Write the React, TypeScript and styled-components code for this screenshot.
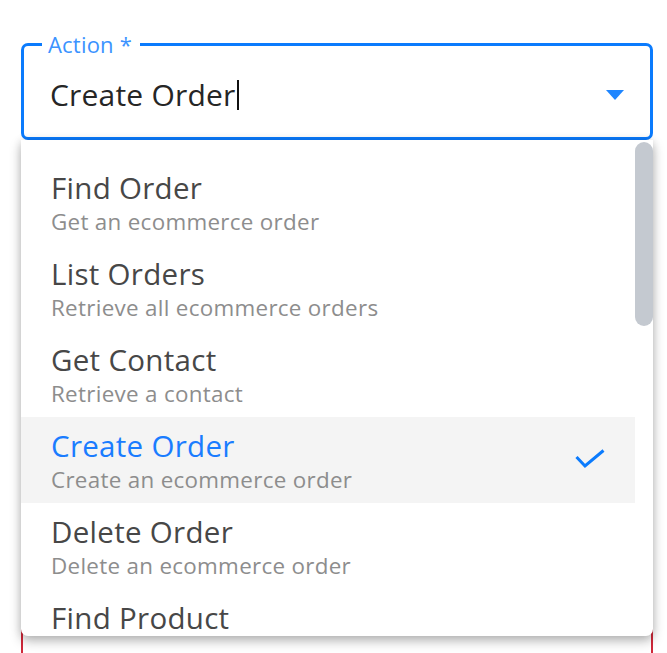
import React, { useState } from "react";
import styled, { createGlobalStyle } from "styled-components";

const GlobalStyle = createGlobalStyle`
  html, body {
    margin: 0;
    padding: 0;
    background: #ffffff;
    font-family: "Open Sans", "Liberation Sans", sans-serif;
  }
`;

const Page = styled.div`
  padding: 31px 14px 0 21px;
  height: 653px;
  box-sizing: border-box;
  overflow: hidden;
`;

const Field = styled.div`
  position: relative;
  z-index: 2;
`;

const Outline = styled.fieldset`
  margin: 0;
  padding: 0 26px 4px 26px;
  border: 3px solid #0b7bfd;
  border-radius: 7px;
  min-width: 0;
`;

const Label = styled.legend`
  margin-left: -8px;
  padding: 0 8px 0 6px;
  font-size: 22px;
  line-height: 26px;
  color: #3b93ff;
  letter-spacing: 0.2px;
`;

const InputRow = styled.div`
  display: flex;
  align-items: center;
  justify-content: space-between;
  height: 76px;
`;

const Value = styled.div`
  display: flex;
  align-items: center;
  font-size: 30px;
  line-height: 40px;
  color: #262626;
  letter-spacing: 0.2px;
`;

const Caret = styled.span`
  display: inline-block;
  width: 2px;
  height: 30px;
  margin-left: 2px;
  background: #111111;
`;

const Arrow = styled.svg`
  width: 18px;
  height: 10px;
  flex-shrink: 0;
`;

const Menu = styled.div`
  position: absolute;
  top: 100%;
  left: 0;
  right: 0;
  height: 496px;
  display: flex;
  background: #ffffff;
  border-radius: 0 0 7px 7px;
  box-shadow: 0 5px 12px rgba(0, 0, 0, 0.28), 0 0 8px rgba(0, 0, 0, 0.1);
  overflow: hidden;
`;

const List = styled.ul`
  flex: 1;
  margin: 0;
  padding: 19px 0 0;
  list-style: none;
  overflow: hidden;
`;

const ScrollTrack = styled.div`
  width: 18px;
  flex-shrink: 0;
  padding-top: 2px;
`;

const Thumb = styled.div`
  height: 184px;
  border-radius: 9px;
  background: #c4c9d0;
`;

const Option = styled.li<{ $selected?: boolean }>`
  display: flex;
  align-items: center;
  justify-content: space-between;
  height: 86px;
  padding: 0 30px 0 30px;
  box-sizing: border-box;
  background: ${(p) => (p.$selected ? "#f4f4f4" : "transparent")};
  cursor: pointer;
`;

const OptionText = styled.div`
  display: flex;
  flex-direction: column;
  align-self: flex-start;
  padding-top: 11px;
`;

const OptionTitle = styled.span<{ $selected?: boolean }>`
  font-size: 29.5px;
  line-height: 36px;
  letter-spacing: 0.3px;
  color: ${(p) => (p.$selected ? "#1a7cff" : "#474747")};
`;

const OptionDesc = styled.span`
  font-size: 22.4px;
  line-height: 32px;
  letter-spacing: 0.3px;
  color: #8d8d8d;
`;

const Check = styled.svg`
  width: 30px;
  height: 22px;
  flex-shrink: 0;
`;

const NextField = styled.div`
  margin-top: 40px;
  height: 600px;
  border: 2px solid #d0283a;
  border-radius: 7px;
`;

const options = [
  { title: "Find Order", desc: "Get an ecommerce order" },
  { title: "List Orders", desc: "Retrieve all ecommerce orders" },
  { title: "Get Contact", desc: "Retrieve a contact" },
  { title: "Create Order", desc: "Create an ecommerce order" },
  { title: "Delete Order", desc: "Delete an ecommerce order" },
  { title: "Find Product", desc: "Get a product" },
];

export default function App() {
  const [selected, setSelected] = useState("Create Order");

  return (
    <>
      <GlobalStyle />
      <Page>
        <Field>
          <Outline>
            <Label>Action *</Label>
            <InputRow>
              <Value>
                {selected}
                <Caret />
              </Value>
              <Arrow viewBox="0 0 18 10">
                <polygon points="0,0 18,0 9,10" fill="#1f86ff" />
              </Arrow>
            </InputRow>
          </Outline>
          <Menu>
            <List>
              {options.map((o) => {
                const isSel = o.title === selected;
                return (
                  <Option
                    key={o.title}
                    $selected={isSel}
                    onClick={() => setSelected(o.title)}
                  >
                    <OptionText>
                      <OptionTitle $selected={isSel}>{o.title}</OptionTitle>
                      <OptionDesc>{o.desc}</OptionDesc>
                    </OptionText>
                    {isSel && (
                      <Check viewBox="0 0 30 22">
                        <polyline
                          points="1.5,8 10,17 28.5,1.5"
                          fill="none"
                          stroke="#0b7bfd"
                          strokeWidth="3"
                        />
                      </Check>
                    )}
                  </Option>
                );
              })}
            </List>
            <ScrollTrack>
              <Thumb />
            </ScrollTrack>
          </Menu>
        </Field>
        <NextField />
      </Page>
    </>
  );
}
